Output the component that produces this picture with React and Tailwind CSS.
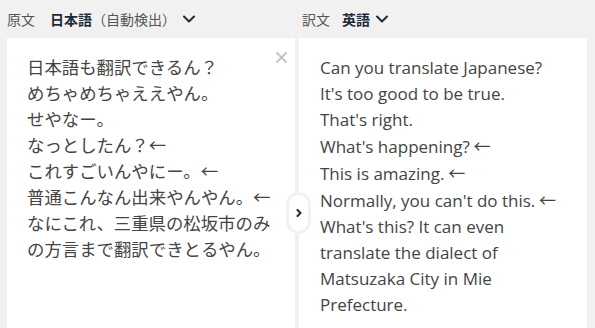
import React from "react";

const Chevron = ({ className }) => (
  <svg className={className} viewBox="0 0 14 10" fill="none" stroke="currentColor" strokeWidth="2" strokeLinecap="round" strokeLinejoin="round">
    <path d="M2 2.5 L7 7.5 L12 2.5" />
  </svg>
);

const jp = [
  "日本語も翻訳できるん？",
  "めちゃめちゃええやん。",
  "せやなー。",
  "なっとしたん？←",
  "これすごいんやにー。←",
  "普通こんなん出来やんやん。←",
  "なにこれ、三重県の松坂市のみ",
  "の方言まで翻訳できとるやん。",
];

const en = [
  ["Can you translate Japanese?", false],
  ["It's too good to be true.", false],
  ["That's right.", false],
  ["What's happening?", true],
  ["This is amazing.", true],
  ["Normally, you can't do this.", true],
  ["What's this? It can even", false],
  ["translate the dialect of", false],
  ["Matsuzaka City in Mie", false],
  ["Prefecture.", false],
];

export default function App() {
  return (
    <div
      className="relative w-[595px] h-[328px] overflow-hidden bg-[#f1f1f1]"
      style={{ fontFamily: '"Noto Sans CJK JP", "Noto Sans", sans-serif' }}
    >
      <div className="grid grid-cols-[288px_288px] gap-[4px] pl-[7px]">
        <div className="flex flex-col">
          <div className="h-[38px] flex items-center text-[14px] text-[#555]">
            <span>原文</span>
            <span className="ml-[15px] font-bold text-[#1d2b3a]">日本語</span>
            <span>（自動検出）</span>
            <Chevron className="ml-[6px] w-[14px] h-[10px] text-[#1d2b3a]" />
          </div>
          <div className="relative h-[290px] bg-white pt-[16px] pl-[20px]">
            <svg className="absolute left-[269px] top-[14px] w-[11px] h-[11px]" viewBox="0 0 11 11" stroke="#c4c4c4" strokeWidth="1.8" strokeLinecap="round">
              <path d="M1 1 L10 10 M10 1 L1 10" />
            </svg>
            <div className="text-[17.4px] leading-[26px] text-[#444]">
              {jp.map((l, i) => (
                <div key={i} className="whitespace-nowrap">{l}</div>
              ))}
            </div>
          </div>
        </div>
        <div className="flex flex-col">
          <div className="h-[38px] flex items-center text-[14px] text-[#555] pl-[3px]">
            <span>訳文</span>
            <span className="ml-[12px] font-bold text-[#1d2b3a]">英語</span>
            <Chevron className="ml-[5px] w-[14px] h-[10px] text-[#1d2b3a]" />
          </div>
          <div className="h-[290px] bg-white pt-[17px] pl-[21px]">
            <div
              className="text-[17px] leading-[26px] text-[#444]"
              style={{ fontFamily: '"Open Sans", sans-serif' }}
            >
              {en.map(([l, arrow], i) => (
                <div key={i} className="whitespace-nowrap">
                  {l}
                  {arrow && (
                    <span style={{ fontFamily: '"Noto Sans CJK JP", sans-serif' }}> ←</span>
                  )}
                </div>
              ))}
            </div>
          </div>
        </div>
      </div>
      <div className="absolute left-[286px] top-[192px] w-[25px] h-[42px] rounded-full bg-white border-[3px] border-[#f1f1f1] flex items-center justify-center">
        <svg className="w-[6px] h-[8px]" viewBox="0 0 6 8" fill="none" stroke="#1d2b3a" strokeWidth="2" strokeLinecap="round" strokeLinejoin="round">
          <path d="M1.5 1 L4.5 4 L1.5 7" />
        </svg>
      </div>
    </div>
  );
}
